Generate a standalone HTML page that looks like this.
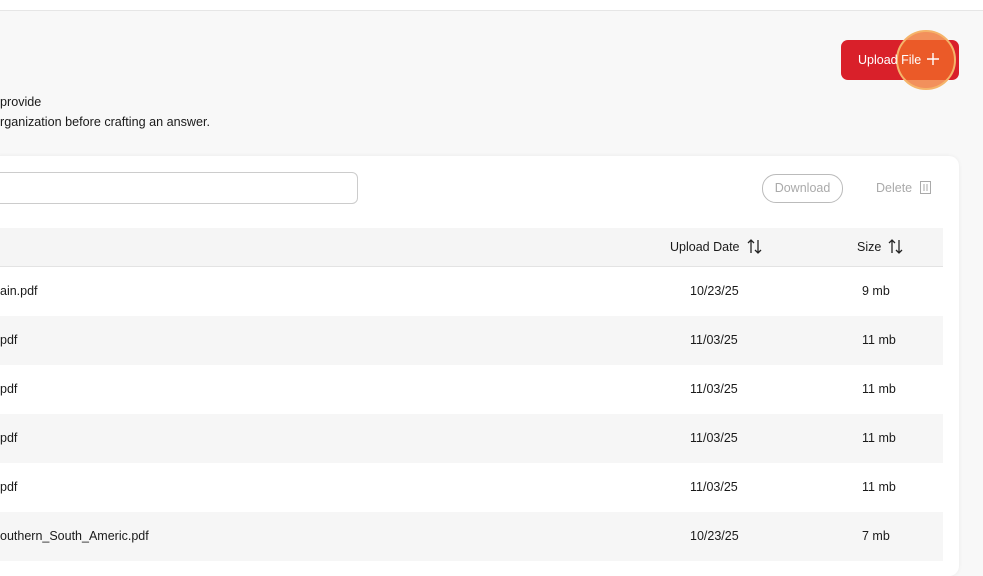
<!DOCTYPE html>
<html><head><style>
*{margin:0;padding:0;box-sizing:border-box}
body{width:983px;height:550px;overflow:hidden;background:#f8f8f8;font-family:"Liberation Sans",sans-serif;color:#1a1a1a;position:relative}
.top{position:absolute;left:0;top:0;width:983px;height:11px;background:#fff;border-bottom:1px solid #e6e6e6}
.btn{position:absolute;left:841px;top:40px;width:118px;height:40px;background:#d9202a;border-radius:7px}
.btxt{position:absolute;left:858px;top:40px;line-height:40px;color:#fff;font-size:12.5px;z-index:3}
.circ{position:absolute;left:896px;top:30px;width:60px;height:60px;border-radius:50%;background:rgba(240,110,40,.75);border:2px solid #f5b46a;z-index:2}
.p{position:absolute;left:0;font-size:12.6px}
.card{position:absolute;left:-10px;top:156px;width:969px;height:420px;background:#fff;border-radius:10px;box-shadow:0 0 4px rgba(0,0,0,.06)}
.search{position:absolute;left:-10px;top:172px;width:368px;height:32px;border:1px solid #ccc;border-radius:6px;background:#fff}
.dl{position:absolute;left:762px;top:174px;width:81px;height:29px;border:1px solid #bbb;border-radius:14px;font-size:12.5px;color:#aaa;text-align:center;line-height:27px}
.del{position:absolute;left:876px;top:181px;font-size:12.5px;color:#aaa}
.head{position:absolute;left:0;top:228px;width:943px;height:39px;background:#f5f5f5;border-bottom:1px solid #e3e3e3;font-size:12.5px}
.row{position:absolute;left:0;width:943px;height:49px;font-size:12.5px;line-height:49px}
.row.g{background:#f6f6f6}
.c1{position:absolute;left:0}.c2{position:absolute;left:690px}.c3{position:absolute;left:862px}
</style></head><body>
<div class="top"></div>
<div class="btn"></div>
<div class="btxt">Upload File <svg width="12" height="12" viewBox="0 0 12 12" style="vertical-align:-1px;margin-left:2px"><path d="M6 0V12M0 6H12" stroke="#fff" stroke-width="1.4"/></svg></div>
<div class="circ"></div>
<div class="p" style="top:95px">provide</div>
<div class="p" style="top:115px">rganization before crafting an answer.</div>
<div class="card"></div>
<div class="search"></div>
<div class="dl">Download</div>
<div class="del">Delete</div>
<svg style="position:absolute;left:920px;top:181px" width="11" height="13" viewBox="0 0 11 13"><rect x="0.5" y="0.5" width="10" height="12" fill="none" stroke="#aaa"/><path d="M4 3V10M7 3V10" stroke="#aaa"/></svg>
<div class="head"><span style="position:absolute;left:670px;top:12px">Upload Date</span>
<svg style="position:absolute;left:747px;top:239px" width="16" height="15"></svg>
<span style="position:absolute;left:857px;top:12px">Size</span></div>
<svg style="position:absolute;left:747px;top:239px" width="16" height="15" viewBox="0 0 16 15"><path d="M4 14V1M1 4L4 1L7 4M11 1V14M8 11L11 14L14 11" fill="none" stroke="#222" stroke-width="1.3"/></svg>
<svg style="position:absolute;left:888px;top:239px" width="16" height="15" viewBox="0 0 16 15"><path d="M4 14V1M1 4L4 1L7 4M11 1V14M8 11L11 14L14 11" fill="none" stroke="#222" stroke-width="1.3"/></svg>
<div class="row" style="top:267px"><span class="c1">ain.pdf</span><span class="c2">10/23/25</span><span class="c3">9 mb</span></div>
<div class="row g" style="top:316px"><span class="c1">pdf</span><span class="c2">11/03/25</span><span class="c3">11 mb</span></div>
<div class="row" style="top:365px"><span class="c1">pdf</span><span class="c2">11/03/25</span><span class="c3">11 mb</span></div>
<div class="row g" style="top:414px"><span class="c1">pdf</span><span class="c2">11/03/25</span><span class="c3">11 mb</span></div>
<div class="row" style="top:463px"><span class="c1">pdf</span><span class="c2">11/03/25</span><span class="c3">11 mb</span></div>
<div class="row g" style="top:512px"><span class="c1">outhern_South_Americ.pdf</span><span class="c2">10/23/25</span><span class="c3">7 mb</span></div>
</body></html>
